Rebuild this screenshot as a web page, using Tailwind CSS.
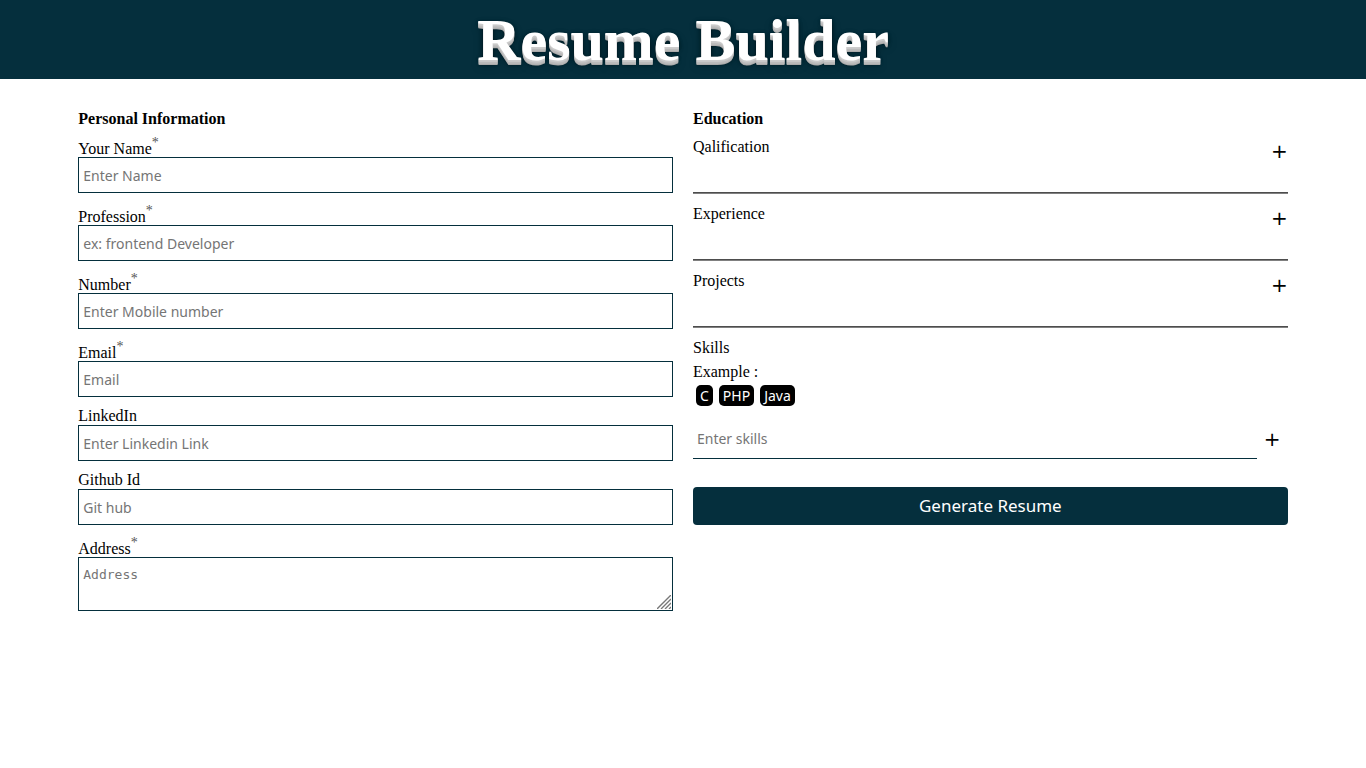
<!DOCTYPE html>
<html lang="en">
<head>
<meta charset="utf-8">
<title>Resume Builder</title>
<script src="https://cdn.jsdelivr.net/npm/@tailwindcss/browser@4"></script>
</head>
<body class="bg-white text-black font-['Liberation_Serif',serif] text-base leading-[18px]">
<header class="bg-[#052f3d] pt-[6px] pb-[5px] text-center">
  <h1 class="text-[60px] leading-[68px] font-bold text-white [text-shadow:0_1px_0_#ccc,0_2px_0_#c9c9c9,0_3px_0_#bbb,0_4px_0_#b9b9b9,0_5px_0_#aaa,0_6px_1px_rgba(0,0,0,.1),0_0_5px_rgba(0,0,0,.1),0_1px_3px_rgba(0,0,0,.3),0_3px_5px_rgba(0,0,0,.2),0_5px_10px_rgba(0,0,0,.25)]">Resume Builder</h1>
</header>
<main class="w-9/10 mx-auto px-[10px] pt-[31px] grid grid-cols-2 gap-5">
  <form class="min-w-0">
    <h2 class="font-bold mb-[7px]">Personal Information</h2>
    <div class="flex flex-col gap-[10px]">
      <div>
        <label for="name" class="flex items-end h-[22px] leading-4">Your Name<span class="self-start text-sm leading-4 text-[#555]">*</span></label>
        <input id="name" type="text" placeholder="Enter Name" class="block w-full h-9 px-1 border border-[#052f3d] font-['Noto_Sans',sans-serif] text-sm placeholder:text-[#757575]">
      </div>
      <div>
        <label for="job" class="flex items-end h-[22px] leading-4">Profession<span class="self-start text-sm leading-4 text-[#555]">*</span></label>
        <input id="job" type="text" placeholder="ex: frontend Developer" class="block w-full h-9 px-1 border border-[#052f3d] font-['Noto_Sans',sans-serif] text-sm placeholder:text-[#757575]">
      </div>
      <div>
        <label for="num" class="flex items-end h-[22px] leading-4">Number<span class="self-start text-sm leading-4 text-[#555]">*</span></label>
        <input id="num" type="tel" placeholder="Enter Mobile number" class="block w-full h-9 px-1 border border-[#052f3d] font-['Noto_Sans',sans-serif] text-sm placeholder:text-[#757575]">
      </div>
      <div>
        <label for="email" class="flex items-end h-[22px] leading-4">Email<span class="self-start text-sm leading-4 text-[#555]">*</span></label>
        <input id="email" type="email" placeholder="Email" class="block w-full h-9 px-1 border border-[#052f3d] font-['Noto_Sans',sans-serif] text-sm placeholder:text-[#757575]">
      </div>
      <div>
        <label for="linkedin" class="flex items-end h-[18px]">LinkedIn</label>
        <input id="linkedin" type="text" placeholder="Enter Linkedin Link" class="block w-full h-9 px-1 border border-[#052f3d] font-['Noto_Sans',sans-serif] text-sm placeholder:text-[#757575]">
      </div>
      <div>
        <label for="github" class="flex items-end h-[18px]">Github Id</label>
        <input id="github" type="text" placeholder="Git hub" class="block w-full h-9 px-1 border border-[#052f3d] font-['Noto_Sans',sans-serif] text-sm placeholder:text-[#757575]">
      </div>
      <div>
        <label for="address" class="flex items-end h-[22px] leading-4">Address<span class="self-start text-sm leading-4 text-[#555]">*</span></label>
        <div class="relative">
          <textarea id="address" placeholder="Address" class="block w-full h-[54px] px-1 py-2 resize-none border border-[#052f3d] font-['DejaVu_Sans_Mono',monospace] text-[13px] placeholder:text-[#757575]"></textarea>
          <svg class="absolute right-[2px] bottom-[2px] w-[14px] h-[14px] pointer-events-none" viewBox="0 0 14 14" fill="none" stroke="#777" stroke-width="1.4" aria-hidden="true"><path d="M0 14L14 0M4 14L14 4M8 14L14 8M12 14L14 12"/></svg>
        </div>
      </div>
    </div>
  </form>
  <section class="min-w-0">
    <h2 class="font-bold mb-[10px]">Education</h2>
    <div class="flex flex-col">
      <div class="flex justify-between items-start h-[54px]">
        <span>Qalification</span>
        <button type="button" aria-label="Add qualification" class="mt-[3px] font-['DejaVu_Sans',sans-serif] text-xl leading-5">+</button>
      </div>
      <hr class="h-[2px] border-t border-b border-t-[#4d4d4d] border-b-[#808080] mb-[11px]">
      <div class="flex justify-between items-start h-[54px]">
        <span>Experience</span>
        <button type="button" aria-label="Add experience" class="mt-[3px] font-['DejaVu_Sans',sans-serif] text-xl leading-5">+</button>
      </div>
      <hr class="h-[2px] border-t border-b border-t-[#4d4d4d] border-b-[#808080] mb-[11px]">
      <div class="flex justify-between items-start h-[54px]">
        <span>Projects</span>
        <button type="button" aria-label="Add project" class="mt-[3px] font-['DejaVu_Sans',sans-serif] text-xl leading-5">+</button>
      </div>
      <hr class="h-[2px] border-t border-b border-t-[#4d4d4d] border-b-[#808080] mb-[11px]">
      <div>
        <label for="skills" class="block mb-[6px]">Skills</label>
        <p>Example :</p>
        <div class="flex gap-[6px] mx-[3px] mt-1 font-['Noto_Sans',sans-serif] text-sm leading-[21px] text-white">
          <span class="bg-black rounded-[5px] px-1">C</span>
          <span class="bg-black rounded-[5px] px-1">PHP</span>
          <span class="bg-black rounded-[5px] px-1">Java</span>
        </div>
        <div class="flex items-center mt-3">
          <input id="skills" type="text" placeholder="Enter skills" class="block flex-1 min-w-0 h-[41px] px-1 border-b border-[#052f3d] font-['Noto_Sans',sans-serif] text-sm placeholder:text-[#757575]">
          <button type="button" aria-label="Add skill" class="w-[31px] font-['DejaVu_Sans',sans-serif] text-xl leading-5">+</button>
        </div>
      </div>
    </div>
    <button type="submit" class="block w-full h-[38px] mt-7 rounded bg-[#052f3d] text-white font-['Noto_Sans',sans-serif] text-[17px]">Generate Resume</button>
  </section>
</main>
</body>
</html>
